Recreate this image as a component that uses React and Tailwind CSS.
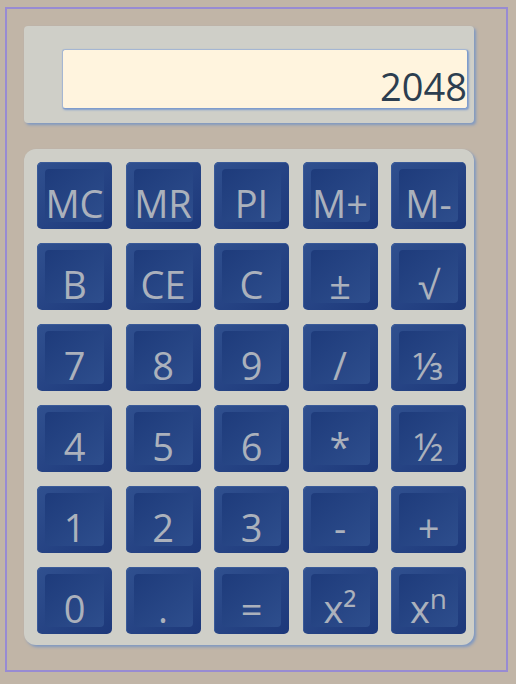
import React from 'react';

const keys = [
  'MC', 'MR', 'PI', 'M+', 'M-',
  'B', 'CE', 'C', '±', '√',
  '7', '8', '9', '/', '⅓',
  '4', '5', '6', '*', '½',
  '1', '2', '3', '-', '+',
  '0', '.', '=', 'x²', 'xn',
];

function Key({ label }) {
  let content = label;
  if (label === 'xn') {
    content = (
      <>
        x<span className="relative -top-[14px] text-[28px]">n</span>
      </>
    );
  }
  return (
    <button className="relative h-[67px] rounded-[5px] bg-gradient-to-br from-[#30508f] to-[#1d387a] shadow-[inset_1px_1px_0_#3a5a98]">
      {/* inner key face */}
      <div className="absolute inset-x-[8px] inset-y-[7px] rounded-[4px] bg-gradient-to-br from-[#1e3b7b] to-[#2e4e8d]" />
      <div className="absolute inset-0 flex items-end justify-center pb-[7px]">
        <span className="text-[38px] leading-none text-[#abb1bc]">{content}</span>
      </div>
    </button>
  );
}

export default function App() {
  return (
    <div
      className="min-h-screen bg-[#c1b5a7] pt-[7px] pl-[5px]"
      style={{ fontFamily: '"Open Sans", "Noto Sans", "DejaVu Sans", sans-serif' }}
    >
      <div className="w-[503px] h-[665px] border-2 border-[#988bd3] pl-[17px] pt-[17px]">
        {/* Display */}
        <div className="w-[450px] h-[97px] rounded-[4px] bg-[#cfcfc8] shadow-[2px_2px_3px_#7e98c2] pl-[38px] pt-[23px]">
          <div className="w-[406px] h-[60px] overflow-hidden rounded-[3px] bg-[#fff4de] border border-[#a5b6d2] border-b-[#7f9ccc] border-r-[#7f9ccc] shadow-[1px_1px_2px_#7f9ccc] flex items-end justify-end">
            <span className="text-[38px] leading-none text-[#2c3e50] pb-[3px]">2048</span>
          </div>
        </div>

        {/* Keypad */}
        <div className="mt-[26px] w-[450px] h-[496px] rounded-[12px] bg-[#cfcfc8] shadow-[2px_2px_3px_#7e98c2] pl-[13px] pt-[13px]">
          <div className="grid grid-cols-[repeat(5,75px)] gap-x-[13.5px] gap-y-[14px]">
            {keys.map((k) => (
              <Key key={k} label={k} />
            ))}
          </div>
        </div>
      </div>
    </div>
  );
}
